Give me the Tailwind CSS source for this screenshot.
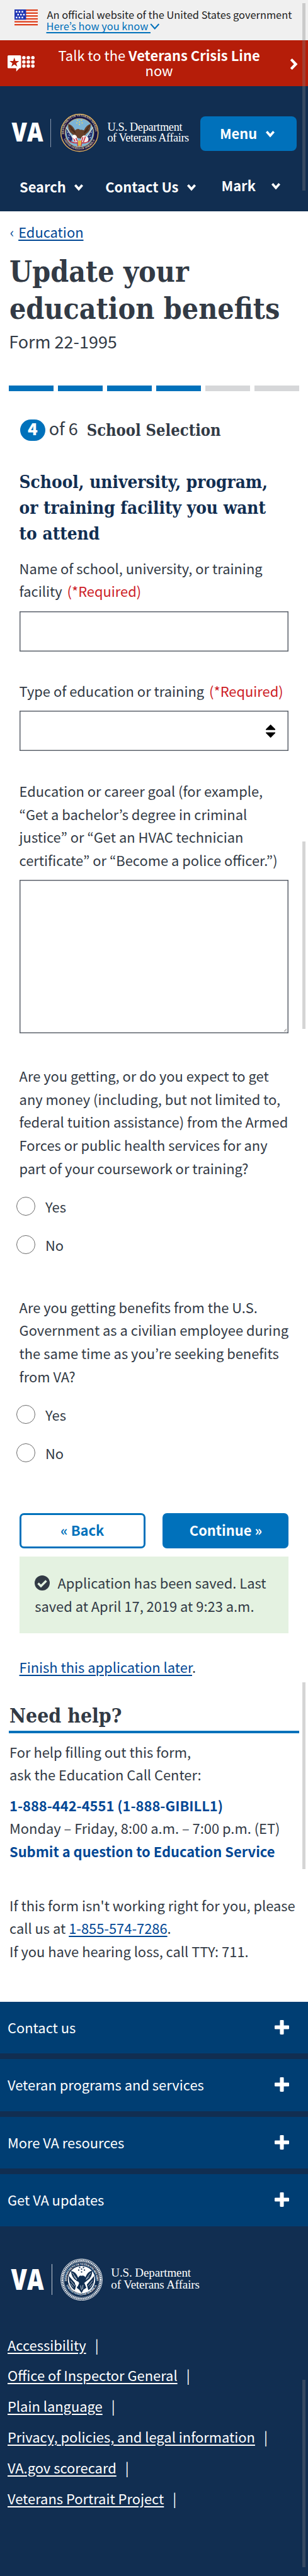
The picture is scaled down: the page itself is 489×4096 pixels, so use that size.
<!DOCTYPE html>
<html lang="en">
<head>
<meta charset="utf-8">
<title>Update your education benefits | Veterans Affairs</title>
<script src="https://cdn.jsdelivr.net/npm/@tailwindcss/browser@4"></script>
</head>
<body class="relative w-[489px] h-[4096px] overflow-hidden bg-white font-['Noto_Sans_CJK_KR',sans-serif] text-[21.9px] leading-[36.6px] text-[#323a45] whitespace-nowrap">

<!-- Shared icons -->
<svg class="hidden">
  <symbol id="chev" viewBox="0 0 20 16"><path d="M2.5 3 L10 11.5 L17.5 3" fill="none" stroke="#fff" stroke-width="5" stroke-linejoin="miter"/></symbol>
  <symbol id="plus" viewBox="0 0 30 30"><path d="M11 1.5Q11 0 12.500 0h5Q19 0 19 1.500V11h9.500Q30 11 30 12.500v5Q30 19 28.500 19H19v9.500Q19 30 17.500 30h-5Q11 30 11 28.500V19H1.500Q0 19 0 17.500v-5Q0 11 1.500 11H11z" fill="#fff"/></symbol>
</svg>

<!-- Official government banner -->
<div class="flex h-[64px] bg-[#f0f0f0] pl-[23px]">
  <svg class="mt-[15px] h-[25.5px] w-[36.500px] shrink-0" viewBox="30.300 19.700 47.700 33.300" preserveAspectRatio="none">
    <rect x="30" y="19" width="49" height="35" fill="#fff"/>
    <g fill="#dd4422"><rect x="30" y="19.700" width="49" height="3.200"/><rect x="30" y="25.700" width="49" height="3.200"/><rect x="30" y="31.700" width="49" height="3.200"/><rect x="30" y="37.700" width="49" height="3.200"/><rect x="30" y="43.700" width="49" height="3.200"/><rect x="30" y="49.800" width="49" height="3.200"/></g>
    <rect x="30" y="19.700" width="24.300" height="21.300" fill="#2036b4"/>
    <g fill="#fff"><rect x="33" y="22.900" width="3.200" height="3.200"/><rect x="39" y="22.900" width="3.200" height="3.200"/><rect x="45" y="22.900" width="3.200" height="3.200"/><rect x="36.200" y="28.900" width="3.200" height="3.200"/><rect x="42.200" y="28.900" width="3.200" height="3.200"/><rect x="48.200" y="28.900" width="3.200" height="3.200"/><rect x="33" y="34.900" width="3.200" height="3.200"/><rect x="39" y="34.900" width="3.200" height="3.200"/><rect x="45" y="34.900" width="3.200" height="3.200"/></g>
  </svg>
  <div class="ml-[14px] pt-[14.300px] text-[16.400px] leading-[18.100px] text-[#212121]">
    <div class="ml-px">An official website of the United States government</div>
    <a class="flex text-[#0071bb]"><span class="underline decoration-[1.500px] underline-offset-[3px] whitespace-pre">Here’s how you know </span><svg class="mt-[5px] -ml-[1px] h-[10px] w-[15.500px]" viewBox="0 0 20 13"><path d="M1.500 1.500L10 11L18.500 1.500" fill="none" stroke="#0071bb" stroke-width="2.800"/></svg></a>
  </div>
</div>

<!-- Crisis line -->
<div class="flex h-[73.400px] justify-between bg-[#b51d09] pl-[12.200px] pr-[16px] text-white">
  <svg class="mt-[24.400px] h-[26px] w-[43px]" viewBox="16 116 56 34" preserveAspectRatio="none">
    <path d="M18 116h24q2 0 2 2v22.700q0 2-2 2h-1.500L34 149.700v-7H18q-2 0-2-2V118q0-2 2-2z" fill="#fff"/>
    <path d="M30 120.500l2.400 7.200h7.600l-6.100 4.500l2.300 7.200l-6.200-4.400l-6.200 4.400l2.300-7.200l-6.100-4.500h7.600z" fill="#b51d09"/>
    <g fill="#fff"><circle cx="49.700" cy="121" r="3.600"/><circle cx="59" cy="121" r="3.600"/><circle cx="68.300" cy="121" r="3.600"/><circle cx="49.700" cy="129.700" r="3.600"/><circle cx="59" cy="129.700" r="3.600"/><circle cx="68.300" cy="129.700" r="3.600"/><circle cx="49.700" cy="138.300" r="3.600"/><circle cx="59" cy="138.300" r="3.600"/><circle cx="68.300" cy="138.300" r="3.600"/></g>
  </svg>
  <div class="ml-[-10px] pt-[11.900px] text-center leading-[24.400px]"><div>Talk to the <b>Veterans Crisis Line</b></div><div>now</div></div>
  <svg class="mt-[27.500px] h-[20px] w-[13px]" viewBox="0 0 17 26"><path d="M3 3L12.500 13L3 23" fill="none" stroke="#fff" stroke-width="5.500"/></svg>
</div>

<!-- Site header -->
<header class="h-[198.500px] bg-[#112e51] text-white">
  <div class="flex h-[140px] items-start">
    <svg class="mt-[57px] ml-[18px] h-[32px] w-[51px] overflow-visible" viewBox="0 0 51 32"><text x="0.500" y="31.300" textLength="50" lengthAdjust="spacingAndGlyphs" font-family="Open Sans, sans-serif" font-weight="800" font-size="42.300" fill="#fff">VA</text></svg>
    <div class="mt-[51.400px] ml-[11.300px] h-[45.300px] w-px bg-[#8796ab]"></div>
    <svg class="mt-[43px] ml-[13.700px] h-[62.200px] w-[62.400px]" viewBox="0 0 80 80">
      <circle cx="40" cy="40" r="39.500" fill="#14144a"/>
      <circle cx="40" cy="40" r="38" fill="#15154a" stroke="#d6b25c" stroke-width="2"/>
      <circle cx="40" cy="40" r="29.300" fill="#7db4d6" stroke="#d6b25c" stroke-width="1"/>
      <path id="ringTop" d="M8.500 44A32 32 0 1 1 71.500 44" fill="none"/>
      <path id="ringBot" d="M6.200 49A35.200 35.200 0 0 0 73.800 49" fill="none"/>
      <g font-family="Liberation Serif, serif" font-weight="700" font-size="6" fill="#e2d3a0">
        <text><textPath href="#ringTop" startOffset="1" textLength="104">DEPARTMENT OF VETERANS AFFAIRS</textPath></text>
        <text><textPath href="#ringBot" startOffset="4" textLength="80">UNITED STATES OF AMERICA</textPath></text>
      </g>
      <g fill="#e5d36b"><circle cx="36" cy="14.500" r="1.300"/><circle cx="44" cy="14.500" r="1.300"/><circle cx="34.500" cy="20" r="1.300"/><circle cx="40" cy="18" r="1.300"/><circle cx="45.500" cy="20" r="1.300"/><circle cx="40" cy="23" r="1.300"/></g>
      <path d="M13 31L26 52L22 60Q12 50 13 31zM67 31L54 52L58 60Q68 50 67 31z" fill="#24306f"/>
      <path d="M15 38l2 2m1 4l2 2m-3 3l2 2m46-13l-2 2m-1 4l-2 2m3 3l-2 2" stroke="#dfe6f2" stroke-width="1.300"/>
      <path d="M12.500 29l16 24M67.500 29l-16 24" stroke="#e9e4d0" stroke-width="1.500"/>
      <path d="M17 22Q26 24 31 35Q37 30 41 34Q44 33 49 35Q54 24 63 22Q64 36 53 43Q50 50 43 52L33 50Q27 45 21 39Q16 32 17 22z" fill="#65402a"/>
      <path d="M19 25l12 14M22 32l10 9M61 25l-11 14M58 33l-9 8" stroke="#3e2719" stroke-width="1.500"/>
      <path d="M25 47Q31 42 35 50L38 58L30 60Q25 54 25 47zM55 48Q48 42 44 50L42 58L54 61Q60 56 58 50z" fill="#f3eeee"/>
      <path d="M27 49l4 9m0-11l5 11M47 49l-3 10m8-11l-4 11M18 55q8 8 20 5M62 55q-8 8-20 5" fill="none" stroke="#c9283a" stroke-width="2"/>
      <path d="M26 45Q32 42 35 49L30 53Q25 51 26 45z" fill="#fff"/>
      <path d="M37 56h7l-1 11h-6z" fill="#e3b63e"/><path d="M35 60l2 8M45 60l-2 8" stroke="#c9283a" stroke-width="1.500"/>
    </svg>
    <div class="mt-[53.500px] ml-[13px] w-[147.500px] font-['Liberation_Serif',serif] text-[18.300px] leading-[16.700px]">
      <div class="mt-[3.300px] tracking-[-0.300px]">U.S. Department</div><div class="tracking-[-0.420px]">of Veterans Affairs</div>
    </div>
    <div class="mt-[47.300px] flex h-[55px] w-[153px] rounded-[8px] bg-[#0071bb] pl-[31px] font-bold leading-[54.500px]">Menu<svg class="mt-[22px] ml-[13.200px] h-[12px] w-[16px]"><use href="#chev"/></svg></div>
  </div>
  <nav class="flex items-start font-bold leading-[36.600px]">
    <div class="ml-[31px] mt-[1.500px] flex w-[136.200px]">Search<svg class="mt-[13px] ml-[12.500px] h-[12px] w-[16px]"><use href="#chev"/></svg></div>
    <div class="mt-[1.500px] flex w-[184.300px]">Contact Us<svg class="mt-[13px] ml-[12.500px] h-[12px] w-[16px]"><use href="#chev"/></svg></div>
    <div class="flex">Mark<svg class="mt-[13px] ml-[24.500px] h-[12px] w-[16px]"><use href="#chev"/></svg></div>
  </nav>
</header>

<main class="h-[2847.100px] px-[13.700px]">
  <div class="flex pt-[15.300px] text-[#004795]"><span class="ml-[2px] w-[13.500px]">‹</span><a class="underline decoration-[1.500px] underline-offset-[3px]">Education</a></div>
  <h1 class="mt-[14.900px] ml-[1.300px] font-['DejaVu_Serif_Condensed','DejaVu_Serif',serif] text-[46.100px] font-bold leading-[59.500px]">Update your<br>education benefits</h1>
  <div class="mt-[1.800px] ml-[0.500px] text-[27px] leading-[40px]">Form 22-1995</div>

  <!-- Progress -->
  <div class="mt-[49.200px] grid h-[9.100px] w-[461.600px] grid-cols-6 gap-[6.200px]">
    <div class="bg-[#0071bb]"></div><div class="bg-[#0071bb]"></div><div class="bg-[#0071bb]"></div><div class="bg-[#0071bb]"></div><div class="bg-[#d6d7d9]"></div><div class="bg-[#d6d7d9]"></div>
  </div>
  <div class="mt-[45.700px] ml-[18.400px] flex h-[33.500px] items-start">
    <div class="h-[33.500px] w-[39.600px] rounded-[17px] bg-[#0071bb] text-center text-[26px] font-black leading-[28.500px] text-white">4</div>
    <div class="ml-[6px] w-[60px] text-[27px] leading-[28.500px]">of 6</div>
    <div class="font-['DejaVu_Serif_Condensed','DejaVu_Serif',serif] text-[25.350px] font-bold leading-[34px]">School Selection</div>
  </div>

  <form class="mx-[16.900px] w-[427.900px]">
    <h2 class="mt-[44.800px] font-['DejaVu_Serif_Condensed','DejaVu_Serif',serif] text-[27.750px] font-bold leading-[41.300px] text-[#112e51]">School, university, program,<br>or training facility you want<br>to attend</h2>
    <label class="mt-[16px] block">Name of school, university, or training<br>facility <span class="ml-[3px] text-[#cd2026]">(*Required)</span></label>
    <div class="mt-[12.800px] h-[63.900px] shadow-[inset_0_0_0_1.500px_#5b616b]"></div>
    <label class="mt-[45.500px] block">Type of education or training <span class="ml-[3px] text-[#cd2026]">(*Required)</span></label>
    <div class="mt-[12.600px] flex h-[63.900px] items-center justify-end pr-[21.500px] shadow-[inset_0_0_0_1.500px_#5b616b]">
      <svg class="h-[21.200px] w-[15.300px]" viewBox="0 0 20 28"><path d="M10 0L20 10v1.500H0V10zM10 28L20 18v-1.500H0V18z" fill="#000"/></svg>
    </div>
    <label class="mt-[45.900px] block">Education or career goal (for example,<br>“Get a bachelor’s degree in criminal<br>justice” or “Get an HVAC technician<br>certificate” or “Become a police officer.”)</label>
    <div class="mt-[12.300px] flex h-[244.500px] items-end justify-end p-[3px] shadow-[inset_0_0_0_1.500px_#5b616b]">
      <svg class="h-[4px] w-[4px]" viewBox="0 0 4 4"><path d="M0 4L4 0M2.500 4L4 2.500" stroke="#555" stroke-width=".8"/></svg>
    </div>

    <div class="mt-[50px]">Are you getting, or do you expect to get<br>any money (including, but not limited to,<br>federal tuition assistance) from the Armed<br>Forces or public health services for any<br>part of your coursework or training?</div>
    <div class="-ml-[4.700px] mt-[26.500px] flex h-[61px] gap-[15.500px] leading-[32.900px]"><span class="size-[30.500px] rounded-full border border-[#6b6b6b]"></span>Yes</div>
    <div class="-ml-[4.700px] flex h-[30.600px] gap-[15.500px] leading-[32.900px]"><span class="size-[30.500px] rounded-full border border-[#6b6b6b]"></span>No</div>

    <div class="mt-[66.700px]">Are you getting benefits from the U.S.<br>Government as a civilian employee during<br>the same time as you’re seeking benefits<br>from VA?</div>
    <div class="-ml-[4.700px] mt-[26.300px] flex h-[61px] gap-[15.500px] leading-[32.900px]"><span class="size-[30.500px] rounded-full border border-[#6b6b6b]"></span>Yes</div>
    <div class="-ml-[4.700px] flex h-[30.600px] gap-[15.500px] leading-[32.900px]"><span class="size-[30.500px] rounded-full border border-[#6b6b6b]"></span>No</div>

    <div class="mt-[80.700px] flex h-[56.600px] justify-between text-center font-bold">
      <div class="w-[200.200px] rounded-[7px] border-3 border-[#0071bb] leading-[48px] text-[#0071bb]">« Back</div>
      <div class="w-[200.200px] rounded-[7px] bg-[#0071bb] leading-[54px] text-white">Continue »</div>
    </div>
    <div class="mt-[12.200px] h-[122.100px] bg-[#e4f2e1] pt-[24.500px] pl-[24.600px]">
      <div class="flex"><svg class="mt-[6.300px] mr-[12.300px] size-[24px]" viewBox="0 0 24 24"><circle cx="12" cy="12" r="12" fill="#323a45"/><path d="M5.500 12.500L10 17L18.500 8.500" fill="none" stroke="#e4f2e1" stroke-width="3.400"/></svg>Application has been saved. Last</div>
      <div>saved at April 17, 2019 at 9:23 a.m.</div>
    </div>
    <div class="mt-[36.600px]"><a class="text-[#004795] underline decoration-[1.500px] underline-offset-[3px]">Finish this application later</a>.</div>
  </form>

  <h2 class="mt-[36.600px] h-[49.100px] w-[461.600px] border-b-4 border-[#0071bb] pl-[1.300px] font-['DejaVu_Serif_Condensed','DejaVu_Serif',serif] text-[31.700px] font-bold leading-[42px]">Need help?</h2>
  <div class="mt-[12.200px] ml-[1.300px]">For help filling out this form,<br>ask the Education Call Center:</div>
  <div class="mt-[11.700px] ml-[1.300px]"><b class="text-[#004795]">1-888-442-4551 (1-888-GIBILL1)</b><br>Monday – Friday, 8:00 a.m. – 7:00 p.m. (ET)<br><b class="text-[#004795]">Submit a question to Education Service</b></div>
  <div class="mt-[49.200px] ml-[1.300px]">If this form isn't working right for you, please<br>call us at <a class="text-[#004795] underline decoration-[1.500px] underline-offset-[3px]">1-855-574-7286</a>.<br>If you have hearing loss, call TTY: 711.</div>
</main>

<footer class="h-[913px] bg-[#112e51] text-white">
  <div class="flex flex-col gap-[9.200px] leading-[81.900px]">
    <div class="flex h-[82.300px] justify-between bg-[#003e73] pl-[12px] pr-[30.500px]">Contact us<svg class="mt-[29px] size-[23px]"><use href="#plus"/></svg></div>
    <div class="flex h-[82.300px] justify-between bg-[#003e73] pl-[12px] pr-[30.500px]">Veteran programs and services<svg class="mt-[29px] size-[23px]"><use href="#plus"/></svg></div>
    <div class="flex h-[82.300px] justify-between bg-[#003e73] pl-[12px] pr-[30.500px]">More VA resources<svg class="mt-[29px] size-[23px]"><use href="#plus"/></svg></div>
    <div class="flex h-[82.300px] justify-between bg-[#003e73] pl-[12px] pr-[30.500px]">Get VA updates<svg class="mt-[29px] size-[23px]"><use href="#plus"/></svg></div>
  </div>
  <div class="flex h-[164.800px] items-start">
    <svg class="mt-[66px] ml-[16.500px] h-[36px] w-[54px] overflow-visible" viewBox="0 0 54 36"><text x="0.500" y="34.600" textLength="52" lengthAdjust="spacingAndGlyphs" font-family="Open Sans, sans-serif" font-weight="800" font-size="46.400" fill="#fff">VA</text></svg>
    <div class="mt-[60.400px] ml-[11.300px] h-[49px] w-px bg-[#c3cbd6]"></div>
    <svg class="mt-[51px] ml-[13.600px] h-[67.600px] w-[67px]" viewBox="0 0 88 88">
      <circle cx="44" cy="44" r="43.200" fill="none" stroke="#fff" stroke-width="1.200"/>
      <circle cx="44" cy="44" r="40" fill="none" stroke="#fff" stroke-width="3.400" stroke-dasharray="2.400 1.200"/>
      <circle cx="44" cy="44" r="37.300" fill="none" stroke="#fff" stroke-width=".8"/>
      <circle cx="44" cy="44" r="28.500" fill="#fff"/>
      <path id="fTop" d="M13.500 50A31 31 0 1 1 74.500 50" fill="none"/>
      <path id="fBot" d="M11 53A35 35 0 0 0 77 53" fill="none"/>
      <g font-family="Liberation Serif, serif" font-weight="700" font-size="6.200" fill="#fff">
        <text><textPath href="#fTop" startOffset="3" textLength="102">DEPARTMENT OF VETERANS AFFAIRS</textPath></text>
        <text><textPath href="#fBot" startOffset="3" textLength="79">UNITED STATES OF AMERICA</textPath></text>
      </g>
      <g fill="#112e51">
        <circle cx="40" cy="18.500" r="1.500"/><circle cx="48" cy="18.500" r="1.500"/><circle cx="38" cy="24" r="1.500"/><circle cx="44" cy="22" r="1.500"/><circle cx="50" cy="24" r="1.500"/><circle cx="44" cy="28" r="1.500"/>
        <path d="M22 26Q32 27 37 40Q40 34 44 36Q49 34 52 39Q57 27 66 25Q67 38 57 45L48 52Q42 56 38 52L33 46Q23 40 22 26z"/>
        <path d="M17.500 36L33 54L30 66Q17 58 17.500 36zM70.500 36L55 54L58 66Q71 58 70.500 36z"/>
        <path d="M38 52l12-1l4 10l-6 4l-4 7l-5-7l-5-4z"/>
      </g>
      <path d="M25 30l9 13M28 37l6 7M63 30l-9 12M60 38l-7 6M21 46l9 11M21 52l6 8M67 46l-9 11M67 52l-6 8M42 56l2 10M47 55l-1 9" stroke="#fff" stroke-width="1"/>
      <path d="M30 50Q36 44 39 51L36 58Q30 57 30 50z" fill="#fff"/>
    </svg>
    <div class="mt-[64.500px] ml-[12.900px] font-['Liberation_Serif',serif] text-[19px] leading-[19px]">
      <div class="tracking-[-0.100px]">U.S. Department</div><div class="tracking-[-0.120px]">of Veterans Affairs</div>
    </div>
  </div>
  <ul class="ml-[12px] leading-[48.800px]">
    <li class="flex gap-[14px]"><a class="underline decoration-[1.500px] underline-offset-[3px]">Accessibility</a>|</li>
    <li class="flex gap-[14px]"><a class="underline decoration-[1.500px] underline-offset-[3px]">Office of Inspector General</a>|</li>
    <li class="flex gap-[14px]"><a class="underline decoration-[1.500px] underline-offset-[3px]">Plain language</a>|</li>
    <li class="flex gap-[14px]"><a class="underline decoration-[1.500px] underline-offset-[3px]">Privacy, policies, and legal information</a>|</li>
    <li class="flex gap-[14px]"><a class="underline decoration-[1.500px] underline-offset-[3px]">VA.gov scorecard</a>|</li>
    <li class="flex gap-[14px]"><a class="underline decoration-[1.500px] underline-offset-[3px]">Veterans Portrait Project</a>|</li>
  </ul>
</footer>

<!-- Scroll indicators overlaying the page edge -->
<div class="absolute left-[480px] top-[5px] h-[297.500px] w-[4.500px] bg-[#808080]/33"></div>
<div class="absolute left-[480px] top-[1338.400px] h-[298px] w-[4.500px] bg-[#808080]/33"></div>
<div class="absolute left-[480px] top-[2674.700px] h-[297.200px] w-[4.500px] bg-[#808080]/33"></div>
<div class="absolute left-[480px] top-[3784.300px] h-[297.800px] w-[4.500px] bg-[#808080]/33"></div>
</body>
</html>
